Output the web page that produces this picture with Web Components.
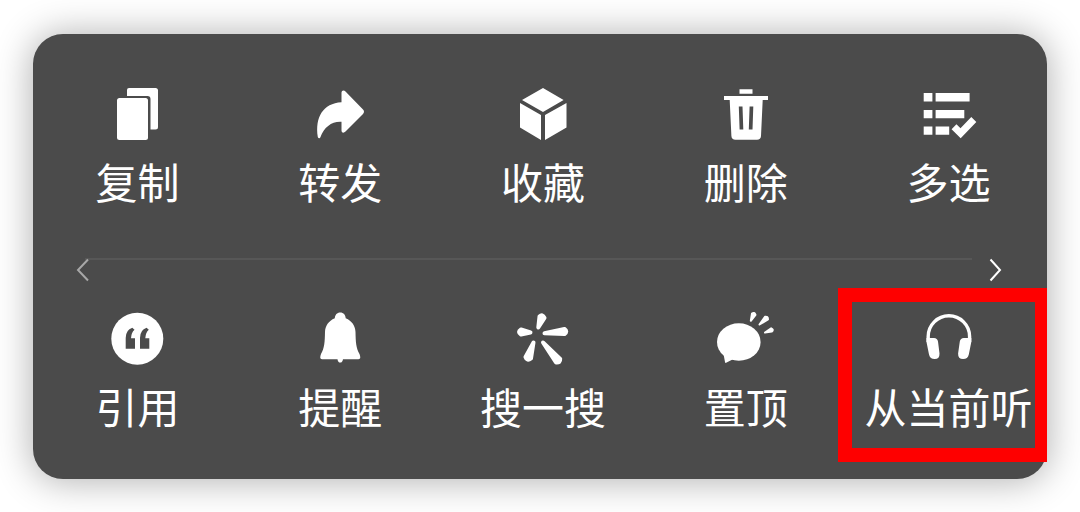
<!DOCTYPE html>
<html lang="zh-CN">
<head>
<meta charset="utf-8">
<title>消息菜单</title>
<style>
  body { margin: 0; background: #fff; font-family: "Noto Sans CJK SC", sans-serif; overflow: hidden; }
</style>
</head>
<body>
<action-panel>
  <action-row>
    <action-item icon="copy">复制</action-item>
    <action-item icon="forward">转发</action-item>
    <action-item icon="favorite">收藏</action-item>
    <action-item icon="trash">删除</action-item>
    <action-item icon="select">多选</action-item>
  </action-row>
  <panel-pager></panel-pager>
  <action-row>
    <action-item icon="quote">引用</action-item>
    <action-item icon="bell">提醒</action-item>
    <action-item icon="search">搜一搜</action-item>
    <action-item icon="pin">置顶</action-item>
    <action-item icon="listen" highlighted>从当前听</action-item>
  </action-row>
</action-panel>

<script>
const icons = {
  copy: `<rect x="8" y="12" width="31" height="42" rx="2.5"/>
    <path d="M20 2H46.5Q49 2 49 4.500V41Q49 43.500 46.500 43.500H41.500V13Q41.500 10 38.500 10H18V4Q18 2 20 2Z"/>`,
  forward: `<path d="M29.500 6.500Q29.500 4.500 31.500 4.500Q32.500 4.500 33.500 5.500L51 23.500Q53 25.700 51 28L33.500 45.500Q32 47 30.500 46.500Q29.500 46 29.500 44.500V35.700C20 35 12 41 8.500 51Q8 52.500 7 52.300Q6 52 5.800 51C3 31 11 17.500 29.500 16.300Z"/>`,
  favorite: `<path d="M28 2L48.600 14L28 26L7 14ZM5 17L26 29V54L5 41.500ZM51.500 17L30 29V54L51.500 41.500Z"/>`,
  trash: `<path d="M21.500 3.300H34.500V7.800H21.500ZM6 10H50V14H44.700L43 50Q42.700 53.800 39 53.800H17.500Q13.700 53.800 13.400 50L11.700 14H6Z"/>
    <path class="cut" d="M20.800 20.500H24.500L25.300 43.500H21.600ZM31.600 20.500H35.300L34.500 43.500H30.800Z"/>`,
  select: `<path d="M2.700 7H11.400V15.400H2.700ZM2.700 24H11.400V32.200H2.700ZM2.700 40.500H11.400V48.700H2.700ZM14.600 7H48.600V15.400H14.600ZM14.600 24H43.300V32.200H14.600ZM14.600 40.500H28.200V48.700H14.600Z"/>
    <path class="line" stroke-width="7" d="M33 40.800L39.600 47.200L52.800 33.500"/>`,
  quote: `<circle cx="28.300" cy="27.700" r="26"/>
    <path class="cut" d="M16.700 37.700V27Q16.700 19 23.300 16.800L25.500 18.800Q22.300 21.500 22 27.200H26V37.700ZM31 37.700V27Q31 19 37.600 16.800L39.800 18.800Q36.600 21.500 36.300 27.200H40.300V37.700Z"/>`,
  bell: `<path d="M28.200 1.600C25 1.600 23 4 22.800 7.300C16.500 10 13.200 15 13 21C12.800 31 12.500 37 9 43Q7 48.200 10 48.200H25.500Q26 51.600 28.200 51.600T31 48.200H46.500Q49.500 48.200 47.500 43C44 37 43.700 31 43.500 21C43.300 15 40 10 33.700 7.300C33.500 4 31.500 1.600 28.200 1.600Z"/>`,
  search: `<path class="petal" d="M23.300 16.500L24.500 5.500Q27.500 2.500 29.500 6.800ZM15.500 21.500L6 23.500Q2 21 6 18.500ZM29.500 22.300L49.500 18Q53 20.500 49.500 23ZM18.500 31.500L16 47.500Q12 50.500 10.500 46ZM28 31.500L45.200 48Q45.500 52 41 51.500Z"/>`,
  pin: `<ellipse cx="20.800" cy="31" rx="21.800" ry="18.800"/><path d="M5.500 43L7 51Q7.300 52.500 8.600 51.600L15.500 48Z"/>
    <path class="petal ray" d="M32.800 9.800L34 2.500Q36.300 .8 37.500 3.800ZM41.500 13.500L47 5.800Q50 5.200 50 8.300ZM47 21.500L53.200 17.300Q56 18.500 53.800 20.500Z"/>`,
  listen: `<path class="line" stroke-width="3.400" d="M7.200 31V25.500A20.700 20.700 0 0 1 48.600 25.500V31"/>
    <path d="M5.500 27H13Q16.300 27 17 30.500L18.500 42.500Q18.700 48 13.700 48Q9 48 8 43.500L5.500 31ZM50.300 27H42.800Q39.500 27 38.800 30.500L37.100 42.500Q36.900 48 42.100 48Q46.800 48 47.800 43.500L50.300 31Z"/>`
};

class ActionPanel extends HTMLElement {
  connectedCallback() {
    this.attachShadow({ mode: "open" }).innerHTML = `
      <style>
        :host { display: block; margin: 34px 33px 33px; padding: 52px 0 45px; border-radius: 30px;
          background: #4b4b4b; box-shadow: 0 1px 36px 2px rgba(0, 0, 0, .3); }
      </style>
      <slot></slot>`;
  }
}

class ActionRow extends HTMLElement {
  connectedCallback() {
    this.attachShadow({ mode: "open" }).innerHTML = `
      <style>
        :host { display: grid; grid-template-columns: repeat(5, minmax(0, 1fr)); margin: 0 -3px 0 3px; }
      </style>
      <slot></slot>`;
  }
}

class ActionItem extends HTMLElement {
  connectedCallback() {
    this.attachShadow({ mode: "open" }).innerHTML = `
      <style>
        :host { display: block; position: relative; }
        :host([highlighted])::after { content: ""; position: absolute; inset: -23px 3px -28px -9px;
          border: 14px solid #fe0000; border-right-width: 12px; pointer-events: none; }
        button { display: flex; flex-direction: column; align-items: center; gap: 11px; width: 100%;
          margin: 0; padding: 0; border: 0; background: none; color: #fff;
          font: inherit; font-size: 42px; line-height: 56px; white-space: nowrap; }
        svg { display: block; width: 56px; height: 56px; overflow: visible; fill: #fff; }
        .cut { fill: #4b4b4b; }
        .line { fill: none; stroke: #fff; }
        .petal { stroke: #fff; stroke-width: 4; stroke-linejoin: round; }
        .ray { stroke-width: 2; }
      </style>
      <button type="button">
        <svg viewBox="0 0 56 56" aria-hidden="true">${icons[this.getAttribute("icon")]}</svg>
        <span><slot></slot></span>
      </button>`;
  }
}

class PanelPager extends HTMLElement {
  connectedCallback() {
    this.attachShadow({ mode: "open" }).innerHTML = `
      <style>
        :host { display: flow-root; padding: 49px 0 29px; }
        hr { height: 2px; margin: 0 75px 0 52px; border: 0; background: #575757; }
        nav { display: flex; justify-content: space-between; margin: -2px 45px 0 43px; }
        button { margin: 0; padding: 0; border: 0; background: none; color: #fff; }
        button:disabled { color: #a8a8a8; }
        svg { display: block; width: 13px; height: 24px; fill: none; stroke: currentColor; stroke-width: 2; }
      </style>
      <hr>
      <nav aria-label="翻页">
        <button type="button" disabled aria-label="上一页"><svg viewBox="0 0 13 24"><path d="M12 1.500L2 12L12 22.500"/></svg></button>
        <button type="button" aria-label="下一页"><svg viewBox="0 0 13 24"><path d="M1.500 1.500L11 12L1.500 22.500"/></svg></button>
      </nav>`;
  }
}

customElements.define("action-panel", ActionPanel);
customElements.define("action-row", ActionRow);
customElements.define("action-item", ActionItem);
customElements.define("panel-pager", PanelPager);
</script>
</body>
</html>
